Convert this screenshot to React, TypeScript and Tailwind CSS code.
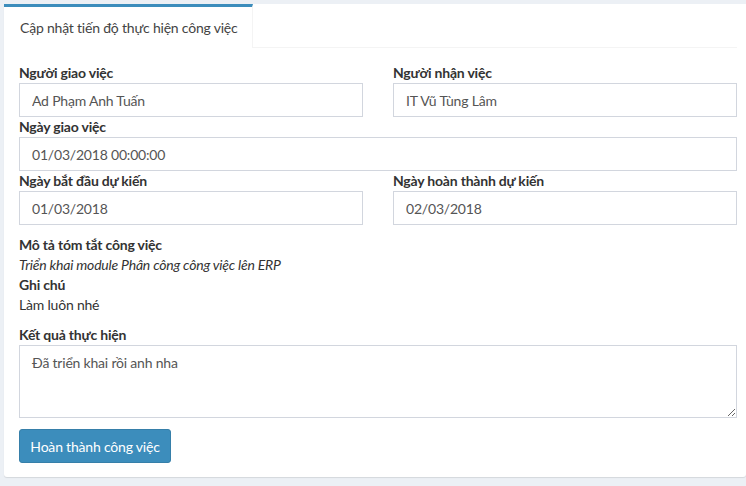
import React from "react";

const font = { fontFamily: "Lato, 'Noto Sans', sans-serif", letterSpacing: "-0.2px" };

const Field: React.FC<{ label: string; value: string }> = ({ label, value }) => (
    <div className="flex flex-col">
        <label className="h-[20px] leading-[20px] text-[14px] font-bold text-[#333]">{label}</label>
        <input
            readOnly
            defaultValue={value}
            className="h-[34px] w-full border border-[#d2d6de] bg-white px-3 text-[14px] text-[#555] outline-none"
            style={font}
        />
    </div>
);

export default function App() {
    return (
        <div className="min-h-screen bg-[#ecf0f5] pl-[4px] pt-[4px]" style={font}>
            <div className="rounded-b-[3px] bg-white pr-[9px] shadow-[0_1px_1px_rgba(0,0,0,0.1)]">
                {/* tabs */}
                <div className="flex">
                    <div className="h-[44px] w-[249px] border-t-[3px] border-r border-t-[#3c8dbc] border-r-[#f4f4f4] pl-4 text-[14px] leading-[42px] text-[#444]">
                        Cập nhật tiến độ thực hiện công việc
                    </div>
                    <div className="h-[44px] flex-1 border-b border-[#f4f4f4]" />
                </div>

                <div className="pl-[15px] pr-0 pt-[15px] pb-[14px] text-[14px] text-[#333]">
                    <div className="grid grid-cols-2 gap-x-[30px]">
                        <Field label="Người giao việc" value="Ad Phạm Anh Tuấn" />
                        <Field label="Người nhận việc" value="IT Vũ Tùng Lâm" />
                    </div>
                    <Field label="Ngày giao việc" value="01/03/2018 00:00:00" />
                    <div className="grid grid-cols-2 gap-x-[30px]">
                        <Field label="Ngày bắt đầu dự kiến" value="01/03/2018" />
                        <Field label="Ngày hoàn thành dự kiến" value="02/03/2018" />
                    </div>

                    <div className="mt-[10px] leading-[20px]">
                        <div className="font-bold">Mô tả tóm tắt công việc</div>
                        <div className="italic">Triển khai module Phân công công việc lên ERP</div>
                        <div className="font-bold">Ghi chú</div>
                        <div>Làm luôn nhé</div>
                    </div>

                    <div className="mt-[10px] flex flex-col">
                        <label className="h-[20px] leading-[20px] font-bold">Kết quả thực hiện</label>
                        <textarea
                            readOnly
                            defaultValue="Đã triển khai rồi anh nha"
                            className="h-[73px] w-full border border-[#d2d6de] px-3 py-[6px] text-[14px] text-[#555] outline-none"
                            style={font}
                        />
                    </div>

                    <button
                        className="mt-[11px] h-[34px] w-[152px] rounded-[3px] border border-[#367fa9] bg-[#3c8dbc] text-[14px] text-white"
                        style={font}
                    >
                        Hoàn thành công việc
                    </button>
                </div>
            </div>
        </div>
    );
}
